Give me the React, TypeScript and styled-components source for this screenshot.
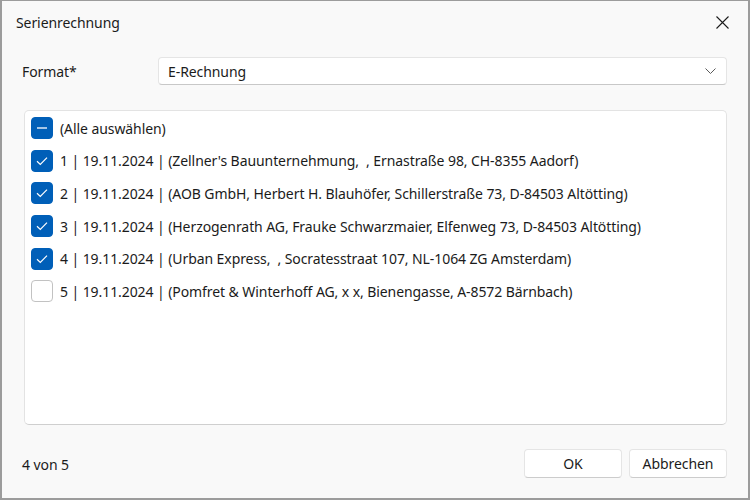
import React from "react";
import styled, { createGlobalStyle } from "styled-components";

const Global = createGlobalStyle`
  html, body { margin: 0; padding: 0; background: #ffffff; }
  * { box-sizing: border-box; }
`;

const Dialog = styled.div`
  width: 750px;
  height: 500px;
  background: #f9f9f9;
  border: 1px solid #9c9c9c;
  border-width: 1px 2px 2px 2px;
  display: flex;
  flex-direction: column;
  font-family: "Noto Sans", "Segoe UI", sans-serif;
  font-size: 14px;
  letter-spacing: -0.08px;
  color: #1b1b1b;
`;

const TitleBar = styled.div`
  height: 43px;
  flex: none;
  display: flex;
  align-items: center;
  justify-content: space-between;
  padding: 0 18px 0 14px;
`;

const Title = styled.span`
  font-size: 14px;
`;

const CloseButton = styled.button`
  width: 16px;
  height: 16px;
  border: none;
  background: transparent;
  padding: 0;
  display: flex;
  align-items: center;
  justify-content: center;
`;

const Body = styled.div`
  flex: 1;
  display: flex;
  flex-direction: column;
  padding: 13px 21px 0 20px;
`;

const FormRow = styled.div`
  display: flex;
  align-items: center;
  height: 28px;
  flex: none;
`;

const Label = styled.span`
  width: 136px;
`;

const Combo = styled.div`
  flex: 1;
  height: 28px;
  background: #ffffff;
  border: 1px solid #e5e5e5;
  border-bottom-color: #c8c8c8;
  border-radius: 4px;
  display: flex;
  align-items: center;
  justify-content: space-between;
  padding: 0 10px 0 9px;
`;

const ListBox = styled.div`
  margin: 25px 0 0 2px;
  height: 315px;
  flex: none;
  background: #ffffff;
  border: 1px solid #e3e3e3;
  border-bottom-color: #cfcfcf;
  border-radius: 5px;
  padding: 6px 0 0 6px;
  display: flex;
  flex-direction: column;
  gap: 10.7px;
`;

const Row = styled.label`
  display: flex;
  align-items: center;
  gap: 7px;
  height: 22px;
  white-space: pre;
`;

const Box = styled.span<{ $on: boolean }>`
  width: 22px;
  height: 22px;
  border-radius: 4px;
  flex: none;
  display: flex;
  align-items: center;
  justify-content: center;
  background: ${(p) => (p.$on ? "#005fb8" : "#ffffff")};
  border: 1px solid ${(p) => (p.$on ? "#005fb8" : "#c2c2c2")};
`;

const Footer = styled.div`
  flex: 1;
  display: flex;
  align-items: center;
  justify-content: space-between;
  padding-top: 3px;
`;

const Count = styled.span`
  padding-top: 2px;
`;

const Buttons = styled.div`
  display: flex;
  gap: 7px;
`;

const Button = styled.button`
  width: 98px;
  height: 29px;
  background: #ffffff;
  border: 1px solid #e5e5e5;
  border-bottom-color: #cccccc;
  border-radius: 4px;
  font-family: inherit;
  font-size: 14px;
  letter-spacing: inherit;
  color: #1b1b1b;
`;

const Check = () => (
  <svg width="12" height="10" viewBox="0 0 12 10">
    <path d="M1 5.2 L4.3 8.4 L11 1.6" fill="none" stroke="#fff" strokeWidth="1.2" />
  </svg>
);

const Dash = () => (
  <svg width="12" height="2" viewBox="0 0 12 2">
    <path d="M1 1 H11" stroke="#fff" strokeWidth="1.3" />
  </svg>
);

const items = [
  { text: "1 | 19.11.2024 | (Zellner's Bauunternehmung,  , Ernastraße 98, CH-8355 Aadorf)", on: true },
  { text: "2 | 19.11.2024 | (AOB GmbH, Herbert H. Blauhöfer, Schillerstraße 73, D-84503 Altötting)", on: true },
  { text: "3 | 19.11.2024 | (Herzogenrath AG, Frauke Schwarzmaier, Elfenweg 73, D-84503 Altötting)", on: true },
  { text: "4 | 19.11.2024 | (Urban Express,  , Socratesstraat 107, NL-1064 ZG Amsterdam)", on: true },
  { text: "5 | 19.11.2024 | (Pomfret & Winterhoff AG, x x, Bienengasse, A-8572 Bärnbach)", on: false },
];

export default function App() {
  return (
    <>
      <Global />
      <Dialog>
        <TitleBar>
          <Title>Serienrechnung</Title>
          <CloseButton aria-label="Schließen">
            <svg width="13" height="13" viewBox="0 0 13 13">
              <path d="M0.5 0.5 L12.5 12.5 M12.5 0.5 L0.5 12.5" stroke="#1b1b1b" strokeWidth="1.1" />
            </svg>
          </CloseButton>
        </TitleBar>
        <Body>
          <FormRow>
            <Label>Format*</Label>
            <Combo>
              <span>E-Rechnung</span>
              <svg width="11" height="6" viewBox="0 0 11 6">
                <path d="M0.5 0.5 L5.5 5.5 L10.5 0.5" fill="none" stroke="#5a5a5a" strokeWidth="1" />
              </svg>
            </Combo>
          </FormRow>
          <ListBox>
            <Row>
              <Box $on>
                <Dash />
              </Box>
              (Alle auswählen)
            </Row>
            {items.map((it) => (
              <Row key={it.text}>
                <Box $on={it.on}>{it.on && <Check />}</Box>
                {it.text}
              </Row>
            ))}
          </ListBox>
          <Footer>
            <Count>4 von 5</Count>
            <Buttons>
              <Button>OK</Button>
              <Button>Abbrechen</Button>
            </Buttons>
          </Footer>
        </Body>
      </Dialog>
    </>
  );
}
